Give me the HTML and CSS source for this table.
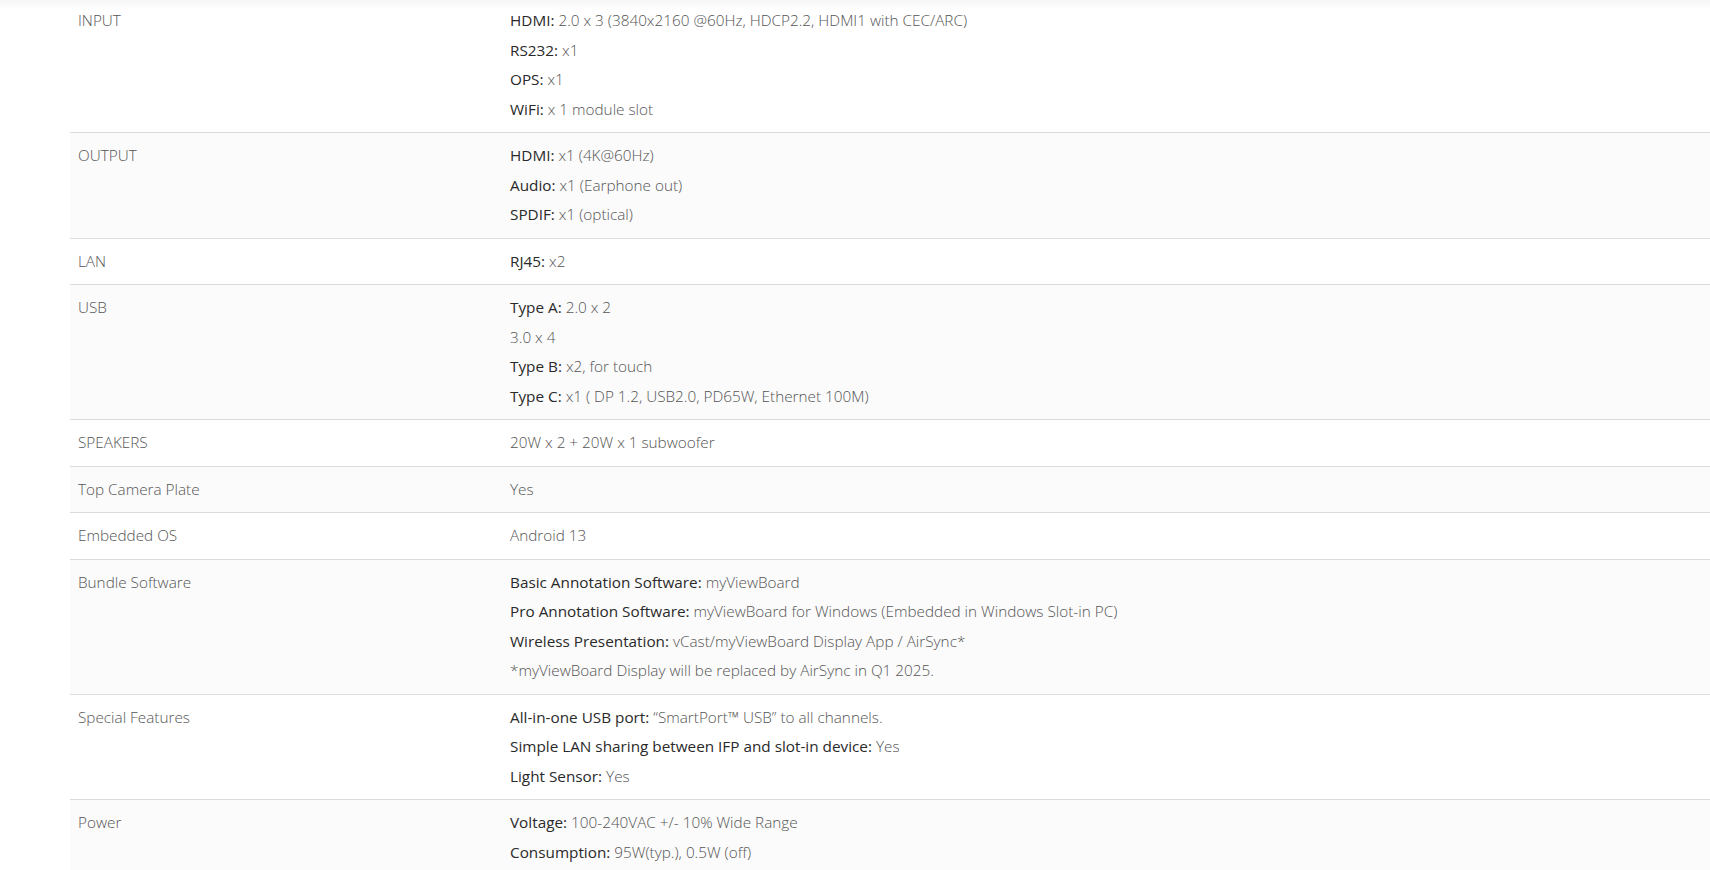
FILE: index.html
```html
<!DOCTYPE html>
<html lang="en">
<head>
  <meta charset="UTF-8">
  <meta name="viewport" content="width=device-width, initial-scale=1.0">
  <title>Specifications</title>
  <link rel="stylesheet" href="styles.css">
</head>
<body>

  <div class="header-shadow"></div>

  <div class="specs">
    <table class="spec-table">
      <tr>
        <td class="label">INPUT</td>
        <td class="value">
          <p><b>HDMI:</b> 2.0 x 3 (3840x2160 @60Hz, HDCP2.2, HDMI1 with CEC/ARC)</p>
          <p><b>RS232:</b> x1</p>
          <p><b>OPS:</b> x1</p>
          <p><b>WiFi:</b> x 1 module slot</p>
        </td>
      </tr>
      <tr>
        <td class="label">OUTPUT</td>
        <td class="value">
          <p><b>HDMI:</b> x1 (4K@60Hz)</p>
          <p><b>Audio:</b> x1 (Earphone out)</p>
          <p><b>SPDIF:</b> x1 (optical)</p>
        </td>
      </tr>
      <tr>
        <td class="label">LAN</td>
        <td class="value">
          <p><b>RJ45:</b> x2</p>
        </td>
      </tr>
      <tr>
        <td class="label">USB</td>
        <td class="value">
          <p><b>Type A:</b> 2.0 x 2</p>
          <p>3.0 x 4</p>
          <p><b>Type B:</b> x2, for touch</p>
          <p><b>Type C:</b> x1 ( DP 1.2, USB2.0, PD65W, Ethernet 100M)</p>
        </td>
      </tr>
      <tr>
        <td class="label">SPEAKERS</td>
        <td class="value">
          <p>20W x 2 + 20W x 1 subwoofer</p>
        </td>
      </tr>
      <tr>
        <td class="label">Top Camera Plate</td>
        <td class="value">
          <p>Yes</p>
        </td>
      </tr>
      <tr>
        <td class="label">Embedded OS</td>
        <td class="value">
          <p>Android 13</p>
        </td>
      </tr>
      <tr>
        <td class="label">Bundle Software</td>
        <td class="value">
          <p><b>Basic Annotation Software:</b> myViewBoard</p>
          <p><b>Pro Annotation Software:</b> myViewBoard for Windows (Embedded in Windows Slot-in PC)</p>
          <p><b>Wireless Presentation:</b> vCast/myViewBoard Display App / AirSync*</p>
          <p>*myViewBoard Display will be replaced by AirSync in Q1 2025.</p>
        </td>
      </tr>
      <tr>
        <td class="label">Special Features</td>
        <td class="value">
          <p><b>All-in-one USB port:</b> “SmartPort™ USB” to all channels.</p>
          <p><b>Simple LAN sharing between IFP and slot-in device:</b> Yes</p>
          <p><b>Light Sensor:</b> Yes</p>
        </td>
      </tr>
      <tr>
        <td class="label">Power</td>
        <td class="value">
          <p><b>Voltage:</b> 100-240VAC +/- 10% Wide Range</p>
          <p><b>Consumption:</b> 95W(typ.), 0.5W (off)</p>
        </td>
      </tr>
    </table>
  </div>

</body>
</html>
```

FILE: styles.css
```css
body {
  font-family: "Open Sans", "Noto Sans", sans-serif;
  margin: 0;
  background-color: #fff;
  overflow: hidden;
}
.header-shadow {
  position: fixed;
  top: 0;
  left: 0;
  right: 0;
  height: 10px;
  background: linear-gradient(to bottom, #f6f6f6, rgba(250, 250, 250, 0));
  z-index: 2;
}
.specs {
  padding-left: 70px;
  margin-top: -2px;
}
.spec-table {
  width: 100%;
  border-collapse: collapse;
  font-size: 15.3px;
}
.spec-table tr {
  border-bottom: 1px solid #dcdcdc;
}
.spec-table tr:nth-child(even) {
  background-color: #fbfbfb;
}
.spec-table td {
  vertical-align: top;
  padding: 8px;
  line-height: 29.5px;
}
.label {
  width: 416px;
  color: #555;
  font-weight: 300;
}
.value {
  color: #555;
  font-weight: 300;
}
.value p {
  margin: 0;
}
.value b {
  color: #2a2a2a;
  font-weight: 400;
}
```
